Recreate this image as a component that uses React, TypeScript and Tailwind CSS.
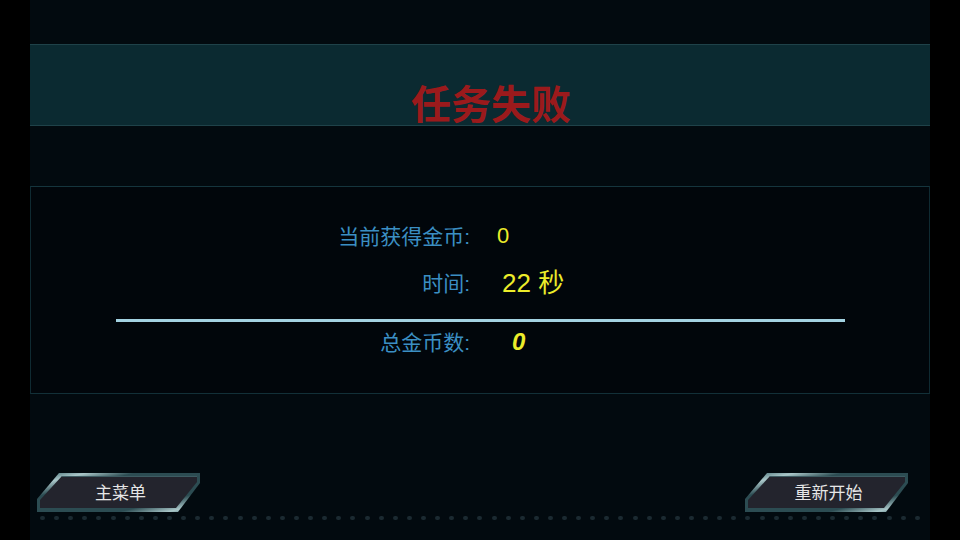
import React from "react";

const font = "font-['Liberation_Sans','Noto_Sans_CJK_SC',sans-serif]";

const BevelButton = ({ label }: { label: string }) => (
  <div className="relative w-[163px] h-[40px] flex items-center justify-center">
    <svg className="absolute inset-0" width="163" height="40" viewBox="0 0 163 40">
      <defs>
        <linearGradient id={`edge-${label}`} x1="0" y1="0" x2="1" y2="1">
          <stop offset="0" stopColor="#2f5a60" />
          <stop offset="0.15" stopColor="#a9c6c8" />
          <stop offset="0.3" stopColor="#2c4c52" />
          <stop offset="0.75" stopColor="#2c4c52" />
          <stop offset="0.9" stopColor="#a9c6c8" />
          <stop offset="1" stopColor="#2f5a60" />
        </linearGradient>
      </defs>
      <polygon points="22,0 163,0 163,10 141,39 0,39 0,26" fill={`url(#edge-${label})`} />
      <polygon points="25,3 160,3 160,9 139,35 3,35 3,27" fill="#23242d" />
      <line x1="25" y1="3.5" x2="160" y2="3.5" stroke="#3d5c62" strokeWidth="1" />
    </svg>
    <span className={`relative text-[17px] text-[#e6e6e6] pt-[2px] pl-[4px] ${font}`}>{label}</span>
  </div>
);

const Row = ({ label, value }: { label: string; value: React.ReactNode }) => (
  <div className="h-[30px] flex items-center leading-none">
    <div className="w-[439px] text-right text-[21px] text-[#3b8fc3]">{label}</div>
    {value}
  </div>
);

export default function App() {
  return (
    <div className={`w-[960px] h-[540px] bg-black flex justify-center overflow-hidden ${font}`}>
      <div className="w-[900px] h-full bg-[#020a0f] flex flex-col">
        <div className="h-[44px]" />
        <div className="h-[82px] bg-[#0b2a31] border-y border-[#1f4249] flex items-end justify-center pl-[22px]">
          <h1 className="text-[40px] font-bold leading-none text-[#9b1a1c]">任务失败</h1>
        </div>
        <div className="h-[60px]" />
        <div className="h-[208px] bg-[#01060b] border border-[#0f2a32] border-t-[#15353d] border-b-[#123038] flex flex-col">
          <div className="h-[34px]" />
          <Row label="当前获得金币:" value={<span className="ml-[27px] text-[22px] text-[#ecec2a]">0</span>} />
          <div className="h-[17px]" />
          <Row
            label="时间:"
            value={<span className="ml-[32px] text-[26px] text-[#ecec2a]">22 秒</span>}
          />
          <div className="h-[21px]" />
          <div className="ml-[85px] w-[729px] h-[3px] bg-[#a3d2e2]" />
          <div className="h-[5px]" />
          <Row
            label="总金币数:"
            value={<span className="ml-[42px] text-[24px] font-bold italic text-[#ecec2a]">0</span>}
          />
        </div>
        <div className="h-[79px]" />
        <div className="flex justify-between pl-[7px] pr-[22px]">
          <BevelButton label="主菜单" />
          <BevelButton label="重新开始" />
        </div>
        <div className="mt-[3px] flex justify-between pl-[10px] pr-[10px]">
          {Array.from({ length: 63 }).map((_, i) => (
            <div key={i} className="w-[5px] h-[4px] rounded-full bg-[#1b2a31]" />
          ))}
        </div>
      </div>
    </div>
  );
}
